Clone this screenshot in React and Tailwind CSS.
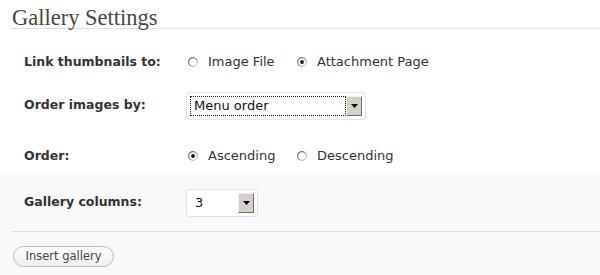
import React from "react";

function Radio({ checked }) {
  return (
    <svg width="10" height="10" viewBox="0 0 10 10" className="shrink-0">
      <defs>
        <linearGradient id="rg" x1="0" y1="0" x2="1" y2="1">
          <stop offset="0" stopColor="#5e5e5e" />
          <stop offset="0.5" stopColor="#959595" />
          <stop offset="1" stopColor="#e6e6e6" />
        </linearGradient>
      </defs>
      <circle cx="5" cy="5" r="4.4" fill="#fff" stroke="url(#rg)" strokeWidth="1.2" />
      {checked && <circle cx="5" cy="5" r="1.9" fill="#111" />}
    </svg>
  );
}

function Option({ checked, label, width }) {
  return (
    <label className={`flex items-center ${width}`}>
      <span className="ml-[2px]">
        <Radio checked={checked} />
      </span>
      <span className="ml-[10px] text-[13px] text-[#333]">{label}</span>
    </label>
  );
}

function Arrow() {
  return (
    <div className="flex h-[20px] w-[16px] items-center justify-center border border-t-[#f4f2ee] border-l-[#f4f2ee] border-r-[#716f64] border-b-[#716f64] bg-[#d4d0c8]">
      <svg width="7" height="4" viewBox="0 0 7 4">
        <polygon points="0,0 7,0 3.5,4" fill="#000" />
      </svg>
    </div>
  );
}

function Row({ label, className = "", children }) {
  return (
    <div className={`flex items-center pl-[24px] ${className}`}>
      <div className="w-[162px] text-[12.5px] font-bold text-[#333]">{label}</div>
      <div className="flex items-center">{children}</div>
    </div>
  );
}

export default function App() {
  return (
    <div
      className="h-[275px] w-[600px] overflow-hidden bg-white"
      style={{ fontFamily: '"DejaVu Sans", Verdana, sans-serif' }}
    >
      <div className="pl-[12px]">
        <div className="flex h-[29px] items-end border-b border-[#dfdfdf]">
          <h2
            className="mb-[-1px] text-[22.5px] leading-none text-[#464646]"
            style={{ fontFamily: '"Liberation Serif", Georgia, serif' }}
          >
            Gallery Settings
          </h2>
        </div>
      </div>

      <Row label="Link thumbnails to:" className="h-[63px] pt-[3px]">
        <Option checked={false} label="Image File" width="w-[109px]" />
        <Option checked label="Attachment Page" />
      </Row>

      <Row label="Order images by:" className="h-[27px]">
        <div className="flex h-[28px] w-[180px] items-center rounded-[3px] border border-[#e2e2e2] bg-white pl-[3px] pr-[3px]">
          <div className="flex h-[20px] flex-1 items-center border border-dotted border-[#222] pl-[3px] text-[13px] text-[#111]">
            Menu order
          </div>
          <Arrow />
        </div>
      </Row>

      <Row label="Order:" className="h-[54px] pt-[20px]">
        <Option checked label="Ascending" width="w-[109px]" />
        <Option checked={false} label="Descending" />
      </Row>

      <div className="bg-[#f9f9f9]">
        <Row label="Gallery columns:" className="h-[58px] pt-[1px]">
          <div className="flex h-[28px] w-[72px] items-center rounded-[3px] border border-[#e2e2e2] bg-white pl-[8px] pr-[3px]">
            <div className="flex-1 text-[13px] text-[#111]">3</div>
            <Arrow />
          </div>
        </Row>
        <div className="pl-[12px]">
          <div className="border-t border-[#dfdfdf]" />
        </div>
        <div className="h-[42px] pl-[13px] pt-[14px]">
          <button className="flex h-[21px] w-[101px] items-center justify-center rounded-full border border-[#bbb] bg-gradient-to-b from-[#ffffff] to-[#efefef] text-[11.5px] text-[#464646]">
            Insert gallery
          </button>
        </div>
      </div>
    </div>
  );
}
